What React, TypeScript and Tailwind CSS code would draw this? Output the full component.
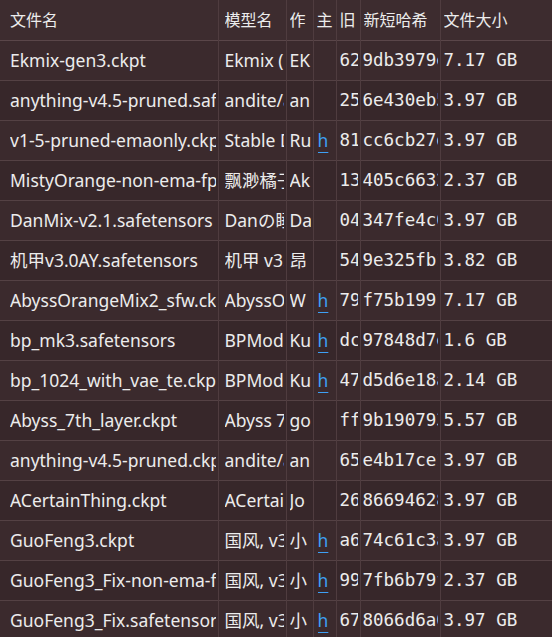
const rows = [
  ["Ekmix-gen3.ckpt", "Ekmix (Ekmix-gen3)", "EK", "", "62b9f2ea", "9db3979e", "7.17 GB"],
  ["anything-v4.5-pruned.safetensors", "andite/anything", "an", "", "25b30ab4", "6e430eb5", "3.97 GB"],
  ["v1-5-pruned-emaonly.ckpt", "Stable Diffusion", "Ru", "h", "81761151", "cc6cb27d", "3.97 GB"],
  ["MistyOrange-non-ema-fp16.ckpt", "飘渺橘子", "Ak", "", "13b8b1c2", "405c6632", "2.37 GB"],
  ["DanMix-v2.1.safetensors", "Danの睡眠", "Da", "", "04f1cd7a", "347fe4c0", "3.97 GB"],
  ["机甲v3.0AY.safetensors", "机甲 v3.0", "昂", "", "54a1f9b3", "9e325fb1", "3.82 GB"],
  ["AbyssOrangeMix2_sfw.ckpt", "AbyssOrangeMix2", "W", "h", "79a0f7b2", "f75b1991", "7.17 GB"],
  ["bp_mk3.safetensors", "BPModel", "Ku", "h", "dc6dc3b6", "97848d7e", "1.6 GB"],
  ["bp_1024_with_vae_te.ckpt", "BPModel", "Ku", "h", "47a0c1d2", "d5d6e18a", "2.14 GB"],
  ["Abyss_7th_layer.ckpt", "Abyss 7th", "go", "", "ffa7b160", "9b190793", "5.57 GB"],
  ["anything-v4.5-pruned.ckpt", "andite/anything", "an", "", "65745d25", "e4b17ce1", "3.97 GB"],
  ["ACertainThing.ckpt", "ACertainThing", "Jo", "", "26e7bb4e", "86694628", "3.97 GB"],
  ["GuoFeng3.ckpt", "国风, v3", "小", "h", "a62a7b4c", "74c61c3a", "3.97 GB"],
  ["GuoFeng3_Fix-non-ema-fp16.safetensors", "国风, v3", "小", "h", "99a4b1e0", "7fb6b79f", "2.37 GB"],
  ["GuoFeng3_Fix.safetensors", "国风, v3", "小", "h", "67c0a19d", "8066d6a0", "3.97 GB"],
]

const sans = "font-['Segoe_UI','Noto_Sans','Noto_Sans_CJK_SC',sans-serif]"
const mono = "font-['DejaVu_Sans_Mono','Noto_Sans_CJK_SC',monospace]"

const cell = "h-10 p-0 border-r border-[#4f3c3f] align-middle text-left font-normal"

function Cell({ children, pl, className = "" }: { children: React.ReactNode; pl: string; className?: string }) {
  return (
    <td className={`${cell} ${pl} ${className}`}>
      <div className="overflow-hidden whitespace-nowrap mr-[2px]">{children}</div>
    </td>
  )
}

function Head({ children, pl }: { children: React.ReactNode; pl: string }) {
  return (
    <th className={`${cell} ${pl}`}>
      <div className="overflow-hidden whitespace-nowrap text-[16px]">{children}</div>
    </th>
  )
}

export default function App() {
  return (
    <div className={`w-[552px] h-[637px] overflow-hidden bg-[#3a2a2d] text-[#ececec] ${sans}`}>
      <table className="table-fixed border-collapse w-[560px] text-[17.5px]">
        <colgroup>
          <col className="w-[218px]" />
          <col className="w-[68px]" />
          <col className="w-[27px]" />
          <col className="w-[23px]" />
          <col className="w-[24px]" />
          <col className="w-[80px]" />
          <col />
        </colgroup>
        <thead>
          <tr className="bg-[#3d2c2f] border-b border-[#5a4649]">
            <Head pl="pl-[10px]">文件名</Head>
            <Head pl="pl-[6px]">模型名</Head>
            <Head pl="pl-[3px]">作</Head>
            <Head pl="pl-[3px]">主</Head>
            <Head pl="pl-[3px]">旧</Head>
            <Head pl="pl-[3px]">新短哈希</Head>
            <Head pl="pl-[3px]">文件大小</Head>
          </tr>
        </thead>
        <tbody>
          {rows.map((r, i) => (
            <tr
              key={i}
              className={`border-b border-[#544144] ${i % 2 === 0 ? "bg-[#3b2a2d]" : "bg-[#37272a]"}`}
            >
              <Cell pl="pl-[10px]">{r[0]}</Cell>
              <Cell pl="pl-[6px]">{r[1]}</Cell>
              <Cell pl="pl-[3px]">{r[2]}</Cell>
              <Cell pl="pl-[4px]">
                {r[3] && <span className="text-[#3ea0f5] underline underline-offset-[5px] decoration-[1.5px]">{r[3]}</span>}
              </Cell>
              <Cell pl="pl-[3px]" className={`${mono} text-[17.5px]`}>{r[4]}</Cell>
              <Cell pl="pl-[2px]" className={`${mono} text-[17.5px]`}>{r[5]}</Cell>
              <Cell pl="pl-[3px]" className={`${mono} text-[17.5px]`}>{r[6]}</Cell>
            </tr>
          ))}
        </tbody>
      </table>
    </div>
  )
}
